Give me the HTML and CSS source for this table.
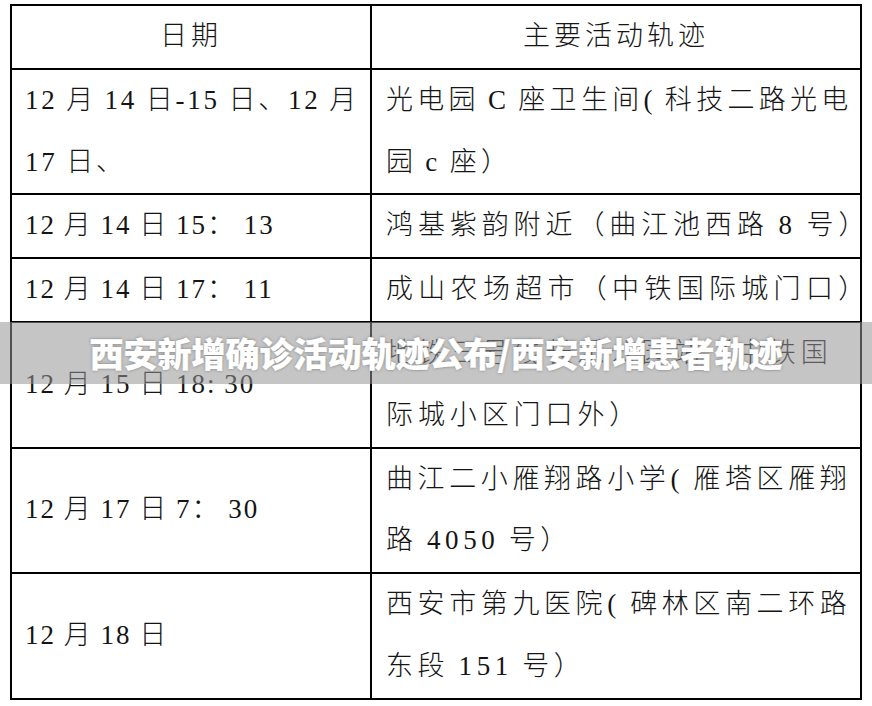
FILE: index.html
```html
<!DOCTYPE html>
<html lang="zh-CN">
<head>
<meta charset="utf-8">
<title>西安新增确诊活动轨迹公布</title>
<link rel="stylesheet" href="styles.css">
</head>
<body>
<div class="page">
  <table class="trace">
    <colgroup>
      <col class="col-date">
      <col class="col-place">
    </colgroup>
    <thead>
      <tr>
        <th>日期</th>
        <th>主要活动轨迹</th>
      </tr>
    </thead>
    <tbody>
      <tr>
        <td class="date spread">12 月 14 日-15 日、12 月<br>17 日、</td>
        <td class="place tight">光电园 C 座卫生间( 科技二路光电<br>园 c 座）</td>
      </tr>
      <tr>
        <td class="date">12 月 14 日 15： 13</td>
        <td class="place">鸿基紫韵附近（曲江池西路 8 号）</td>
      </tr>
      <tr>
        <td class="date">12 月 14 日 17： 11</td>
        <td class="place wide">成山农场超市（中铁国际城门口）</td>
      </tr>
      <tr>
        <td class="date">12 月 15 日 18: 30</td>
        <td class="place">地铁三号线长乐公园站（中铁国<br>际城小区门口外）</td>
      </tr>
      <tr>
        <td class="date">12 月 17 日 7： 30</td>
        <td class="place narrow">曲江二小雁翔路小学( 雁塔区雁翔<br>路 4050 号）</td>
      </tr>
      <tr>
        <td class="date">12 月 18 日</td>
        <td class="place narrow">西安市第九医院( 碑林区南二环路<br>东段 151 号）</td>
      </tr>
    </tbody>
  </table>
  <div class="banner">西安新增确诊活动轨迹公布/西安新增患者轨迹</div>
</div>
</body>
</html>
```

FILE: styles.css
```css
html, body {
  margin: 0;
  padding: 0;
  background: #ffffff;
}

.page {
  position: relative;
  width: 872px;
  height: 706px;
  overflow: hidden;
  padding: 4px 0 0 10px;
  box-sizing: border-box;
}

.trace {
  border-collapse: collapse;
  table-layout: fixed;
  width: 850px;
  font-family: "Liberation Serif", "Noto Sans CJK SC", serif;
  font-size: 27px;
  font-weight: 300;
  color: #151515;
  line-height: 61.8px;
}

.col-date {
  width: 360px;
}

.col-place {
  width: 490px;
}

.trace th,
.trace td {
  border: 2px solid #000;
  padding: 0;
  white-space: nowrap;
  vertical-align: middle;
  overflow: visible;
}

.trace th {
  font-weight: 300;
  text-align: center;
  letter-spacing: 4px;
}

.date {
  padding-left: 13px !important;
  letter-spacing: 2px;
  word-spacing: -1px;
}

.spread {
  letter-spacing: 2.8px;
}

.place {
  padding-left: 14px !important;
  letter-spacing: 4.9px;
  word-spacing: -2px;
}

.narrow {
  letter-spacing: 4.6px;
}

.tight {
  letter-spacing: 4.3px;
  word-spacing: -3px;
}

.wide {
  letter-spacing: 5.3px;
}

.banner {
  position: absolute;
  left: 0;
  top: 322px;
  width: 872px;
  height: 62px;
  background: rgba(150, 150, 150, 0.55);
  color: #ffffff;
  font-family: "Noto Sans CJK SC", sans-serif;
  font-weight: 900;
  font-size: 34px;
  line-height: 62px;
  text-align: center;
  white-space: nowrap;
  text-shadow: 0 0 3px rgba(80, 80, 80, 0.7), 0.5px 0 0 #fff, -0.5px 0 0 #fff;
}
```
